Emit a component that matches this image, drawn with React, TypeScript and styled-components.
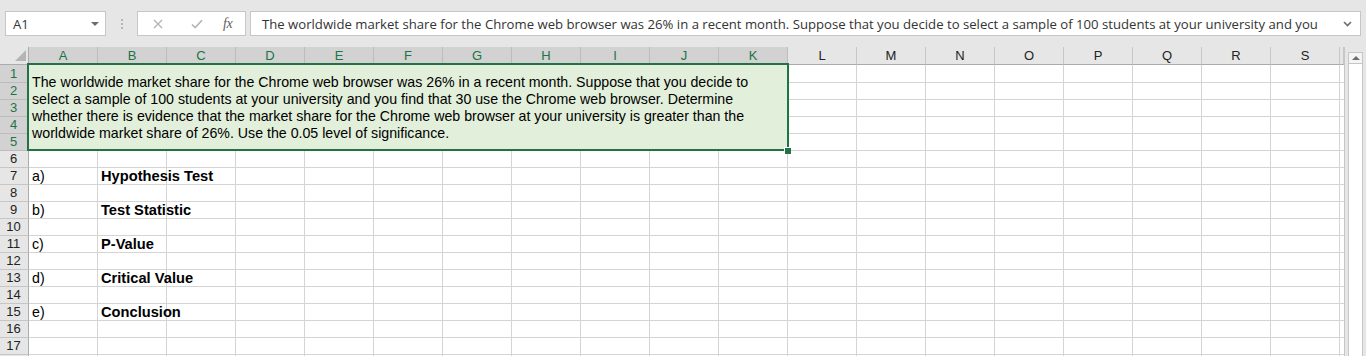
import React from 'react';
import styled, { createGlobalStyle, css } from 'styled-components';

const Global = createGlobalStyle`
  html, body { margin: 0; padding: 0; background: #ffffff; overflow: hidden; }
  #root { width: 1366px; height: 356px; overflow: hidden; }
`;

const GREEN = '#217346';
const GRID = '#d4d4d4';
const BAND = '#e6e6e6';
const SEL = '#d2d2d2';

const Page = styled.div`
  width: 1366px;
  height: 356px;
  display: flex;
  flex-direction: column;
  background: ${BAND};
  overflow: hidden;
`;

const FormulaRow = styled.div`
  height: 47px;
  flex: none;
  box-sizing: border-box;
  padding: 11px 5px 0 5px;
  display: flex;
  align-items: flex-start;
`;

const Box = styled.div`
  height: 25px;
  box-sizing: border-box;
  background: #ffffff;
  border: 1px solid #c6c6c6;
  display: flex;
  align-items: center;
  font-family: 'Open Sans', 'Noto Sans', sans-serif;
  font-size: 13.15px;
  color: #333333;
`;

const NameBox = styled(Box)`
  width: 101px;
  padding: 0 6px 0 7px;
  justify-content: space-between;
`;

const DropTri = styled.span`
  width: 0;
  height: 0;
  border-left: 4px solid transparent;
  border-right: 4px solid transparent;
  border-top: 4px solid #6d6d6d;
`;

const Grip = styled.div`
  width: 31px;
  height: 25px;
  display: flex;
  flex-direction: column;
  align-items: center;
  justify-content: center;
  gap: 2px;
  & > i {
    width: 2px;
    height: 2px;
    background: #b4b4b4;
  }
`;

const FxBox = styled(Box)`
  width: 109px;
  padding: 0 0 0 15px;
`;

const IconSlot = styled.span<{ $w: number }>`
  width: ${(p) => p.$w}px;
  display: flex;
  align-items: center;
  justify-content: flex-start;
`;

const FxText = styled.span`
  font-family: 'Liberation Serif', 'DejaVu Serif', serif;
  font-style: italic;
  font-size: 14px;
  color: #606060;
  letter-spacing: -0.5px;
`;

const FormulaBox = styled(Box)`
  flex: 1;
  margin-left: 4px;
  padding: 0 8px 0 11px;
  justify-content: space-between;
  white-space: nowrap;
  overflow: hidden;
`;

const Sheet = styled.div`
  flex: 1;
  display: flex;
  overflow: hidden;
  background: #ffffff;
`;

const Grid = styled.div`
  width: 1344px;
  flex: none;
  display: grid;
  grid-template-columns: 29px repeat(19, 69px) 4px;
  grid-template-rows: 18px 18px repeat(17, 17px);
  align-content: start;
  font-family: 'Liberation Sans', Arial, sans-serif;
  font-size: 13px;
`;

const Corner = styled.div`
  background: ${BAND};
  border-right: 1px solid #ababab;
  border-bottom: 1px solid #ababab;
  box-sizing: border-box;
  position: relative;
  &::after {
    content: '';
    position: absolute;
    right: 2px;
    bottom: 3px;
    width: 0;
    height: 0;
    border-left: 11px solid transparent;
    border-bottom: 11px solid #b5b5b5;
  }
`;

const ColHead = styled.div<{ $sel?: boolean }>`
  box-sizing: border-box;
  display: flex;
  align-items: flex-start;
  justify-content: center;
  line-height: 17px;
  background: ${(p) => (p.$sel ? SEL : BAND)};
  color: ${(p) => (p.$sel ? GREEN : '#222222')};
  border-right: 1px solid ${(p) => (p.$sel ? '#bcbcbc' : '#c6c6c6')};
  border-bottom: 1px solid ${(p) => (p.$sel ? GREEN : '#ababab')};
`;

const RowHead = styled.div<{ $sel?: boolean }>`
  box-sizing: border-box;
  display: flex;
  align-items: flex-end;
  justify-content: center;
  line-height: 17px;
  padding-right: 1px;
  background: ${(p) => (p.$sel ? SEL : BAND)};
  color: ${(p) => (p.$sel ? GREEN : '#222222')};
  border-right: 1px solid ${(p) => (p.$sel ? GREEN : '#ababab')};
  border-bottom: 1px solid ${(p) => (p.$sel ? '#bcbcbc' : '#c6c6c6')};
`;

const Cell = styled.div<{ $bold?: boolean }>`
  box-sizing: border-box;
  border-right: 1px solid ${GRID};
  border-bottom: 1px solid ${GRID};
  padding: 1px 3px 0 3px;
  display: flex;
  align-items: flex-start;
  font-size: 14.2px;
  line-height: 15px;
  white-space: nowrap;
  color: #000000;
  ${(p) =>
    p.$bold &&
    css`
      font-size: 14.67px;
      font-weight: 700;
    `}
`;

const Merged = styled.div`
  grid-column: span 11;
  grid-row: span 5;
  position: relative;
  z-index: 2;
  box-sizing: border-box;
  background: #e2efda;
  padding: 0 20px 0 3px;
  display: flex;
  align-items: center;
  font-size: 14.2px;
  line-height: 17px;
  color: #000000;
  &::before {
    content: '';
    position: absolute;
    left: -2px;
    top: -2px;
    right: -1px;
    bottom: 0;
    border: 2px solid ${GREEN};
    pointer-events: none;
  }
`;

const FillHandle = styled.span`
  position: absolute;
  right: -3px;
  bottom: -3px;
  width: 6px;
  height: 6px;
  background: ${GREEN};
  border: 1px solid #ffffff;
  border-right: none;
  border-bottom: none;
  z-index: 3;
`;

const ScrollBar = styled.div`
  flex: 1;
  display: flex;
  flex-direction: column;
  background: ${BAND};
  border-left: 1px solid #c6c6c6;
  padding: 5px 0 0 3px;
`;

const ScrollBtn = styled.div`
  width: 15px;
  height: 12px;
  box-sizing: border-box;
  background: #f4f4f4;
  border: 1px solid #c6c6c6;
  display: flex;
  align-items: center;
  justify-content: center;
  &::after {
    content: '';
    width: 0;
    height: 0;
    border-left: 4px solid transparent;
    border-right: 4px solid transparent;
    border-bottom: 4px solid #6d6d6d;
  }
`;

const Thumb = styled.div`
  width: 15px;
  flex: 1;
  box-sizing: border-box;
  background: #ffffff;
  border-left: 1px solid #c6c6c6;
  border-right: 1px solid #c6c6c6;
`;

const COLS = 'ABCDEFGHIJKLMNOPQRS'.split('');
const SEL_COLS = 11;
const SEL_ROWS = 5;
const NUM_ROWS = 18;
const LAST_NUMBERED = 17;

const LABELS: Record<number, [string, string]> = {
  7: ['a)', 'Hypothesis Test'],
  9: ['b)', 'Test Statistic'],
  11: ['c)', 'P-Value'],
  13: ['d)', 'Critical Value'],
  15: ['e)', 'Conclusion'],
};

const QUESTION =
  'The worldwide market share for the Chrome web browser was 26% in a recent month. Suppose that you decide to select a sample of 100 students at your university and you find that 30 use the Chrome web browser. Determine whether there is evidence that the market share for the Chrome web browser at your university is greater than the worldwide market share of 26%. Use the 0.05 level of significance.';

const FORMULA_SHOWN =
  'The worldwide market share for the Chrome web browser was 26% in a recent month. Suppose that you decide to select a sample of 100 students at your university and you';

function XIcon() {
  return (
    <svg width="10" height="10" viewBox="0 0 10 10">
      <path d="M1 1 L9 9 M9 1 L1 9" stroke="#b4b4b4" strokeWidth="1.4" fill="none" />
    </svg>
  );
}

function CheckIcon() {
  return (
    <svg width="12" height="10" viewBox="0 0 12 10">
      <path d="M1 5.5 L4.2 8.6 L11 1.2" stroke="#b4b4b4" strokeWidth="1.6" fill="none" />
    </svg>
  );
}

function ChevronDown() {
  return (
    <svg width="9" height="6" viewBox="0 0 9 6">
      <path d="M1 1 L4.5 4.5 L8 1" stroke="#6d6d6d" strokeWidth="1.6" fill="none" />
    </svg>
  );
}

export default function App() {
  const rows: React.ReactNode[] = [];
  for (let r = 1; r <= NUM_ROWS; r++) {
    const sel = r <= SEL_ROWS;
    rows.push(
      <RowHead key={`h${r}`} $sel={sel}>
        {r <= LAST_NUMBERED ? r : ''}
      </RowHead>
    );
    COLS.forEach((c, ci) => {
      if (r <= SEL_ROWS && ci < SEL_COLS) {
        if (r === 1 && ci === 0) {
          rows.push(
            <Merged key="merged">
              <span>{QUESTION}</span>
              <FillHandle />
            </Merged>
          );
        }
        return;
      }
      const lbl = LABELS[r];
      let text = '';
      let bold = false;
      if (lbl && ci === 0) text = lbl[0];
      if (lbl && ci === 1) {
        text = lbl[1];
        bold = true;
      }
      rows.push(
        <Cell key={`${c}${r}`} $bold={bold}>
          {text}
        </Cell>
      );
    });
    rows.push(<Cell key={`T${r}`} />);
  }

  return (
    <>
      <Global />
      <Page>
        <FormulaRow>
          <NameBox>
            <span>A1</span>
            <DropTri />
          </NameBox>
          <Grip>
            <i />
            <i />
            <i />
          </Grip>
          <FxBox>
            <IconSlot $w={38}>
              <XIcon />
            </IconSlot>
            <IconSlot $w={32}>
              <CheckIcon />
            </IconSlot>
            <IconSlot $w={20}>
              <FxText>fx</FxText>
            </IconSlot>
          </FxBox>
          <FormulaBox>
            <span>{FORMULA_SHOWN}</span>
            <ChevronDown />
          </FormulaBox>
        </FormulaRow>
        <Sheet>
          <Grid>
            <Corner />
            {COLS.map((c, i) => (
              <ColHead key={c} $sel={i < SEL_COLS}>
                {c}
              </ColHead>
            ))}
            <ColHead />
            {rows}
          </Grid>
          <ScrollBar>
            <ScrollBtn />
            <Thumb />
          </ScrollBar>
        </Sheet>
      </Page>
    </>
  );
}
